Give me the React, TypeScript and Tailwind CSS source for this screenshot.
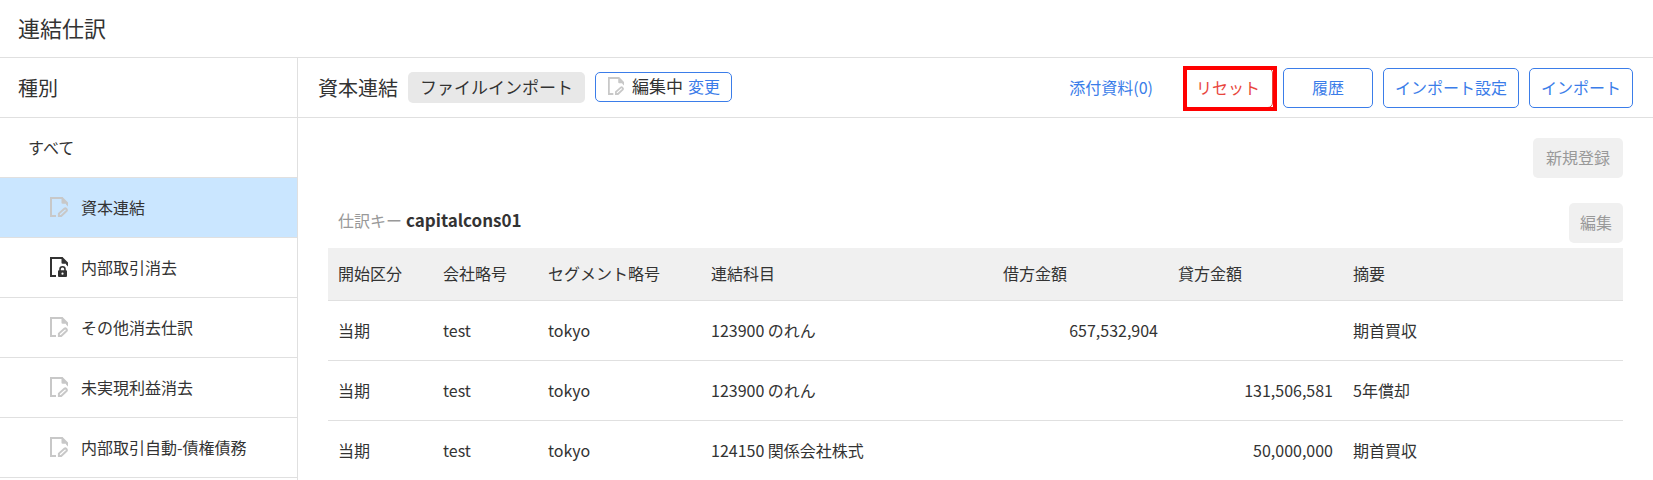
import { useState } from 'react'
import clsx from 'clsx'

type Status = 'editing' | 'locked'

const categories: { name: string; status: Status }[] = [
  { name: '資本連結', status: 'editing' },
  { name: '内部取引消去', status: 'locked' },
  { name: 'その他消去仕訳', status: 'editing' },
  { name: '未実現利益消去', status: 'editing' },
  { name: '内部取引自動-債権債務', status: 'editing' },
]

const columns = [
  { label: '開始区分', width: 'w-[105px]' },
  { label: '会社略号', width: 'w-[105px]' },
  { label: 'セグメント略号', width: 'w-[163px]' },
  { label: '連結科目', width: 'w-[292px]' },
  { label: '借方金額', width: 'w-[175px]' },
  { label: '貸方金額', width: 'w-[175px]' },
  { label: '摘要', width: '' },
]

const rows = [
  { account: '123900 のれん', debit: '657,532,904', credit: '', note: '期首買収' },
  { account: '123900 のれん', debit: '', credit: '131,506,581', note: '5年償却' },
  { account: '124150 関係会社株式', debit: '', credit: '50,000,000', note: '期首買収' },
]

function StatusIcon({ status, className }: { status: Status; className: string }) {
  return (
    <svg viewBox="0 0 18 20" className={className} aria-hidden="true">
      <path d="M6 19H1V1H12.5" fill="none" stroke="currentColor" strokeWidth="2" />
      <path d="M11.5 0H12.5L18 5.5V9.5L16 7.6V6.8H12.6Q11.5 6.8 11.5 5.7Z" fill="currentColor" />
      {status === 'editing' ? (
        <path
          d="M8.9 19V16.6L14.6 11.6Q15.4 11 16.1 11.7L16.6 12.4Q17.2 13.3 16.5 14L11.2 19Z"
          fill="none"
          stroke="currentColor"
          strokeWidth="2"
        />
      ) : (
        <>
          <path d="M10 14V12.2A2.5 2.5 0 0 1 15 12.2V14" fill="none" stroke="currentColor" strokeWidth="1.6" />
          <path
            fillRule="evenodd"
            d="M9 13.2H16Q17 13.2 17 14.2V19Q17 20 16 20H9Q8 20 8 19V14.2Q8 13.2 9 13.2ZM12.5 15.6A1.1 1.1 0 1 0 12.5 17.8A1.1 1.1 0 1 0 12.5 15.6Z"
            fill="currentColor"
          />
        </>
      )}
    </svg>
  )
}

const outlineButton = 'h-10 min-w-[90px] px-[11px] pb-[2px] rounded-[5px] border border-[#3b7de9] text-[#3b7de9] bg-white'
const disabledButton = 'h-10 px-[11px] pb-[2px] rounded-[5px] bg-[#f0f0f0] text-[#999]'

export default function App() {
  const [selected, setSelected] = useState('資本連結')

  return (
    <div className="h-screen flex flex-col overflow-hidden bg-white text-[#333] text-base font-['Noto_Sans_CJK_JP',sans-serif]">
      <header className="h-[58px] shrink-0 flex items-center px-[18px] pb-[2px] border-b border-[#e0e0e0]">
        <h1 className="text-[22px]">連結仕訳</h1>
      </header>

      <div className="flex flex-1 min-h-0">
        {/* 種別一覧 */}
        <aside className="w-[298px] shrink-0 border-r border-[#e0e0e0]">
          <h2 className="h-[60px] flex items-center px-[18px] text-xl border-b border-[#e0e0e0]">種別</h2>
          <nav>
            <button className="w-full h-[60px] px-7 pb-[2px] text-left border-b border-[#e0e0e0]">すべて</button>
            {categories.map((c) => (
              <button
                key={c.name}
                onClick={() => setSelected(c.name)}
                className={clsx(
                  'w-full h-[60px] pl-[50px] pb-[2px] flex items-center gap-[13px] border-b border-[#e0e0e0]',
                  selected === c.name && 'bg-[#cae6ff]'
                )}
              >
                <StatusIcon
                  status={c.status}
                  className={clsx('w-[18px] h-5', c.status === 'locked' ? 'text-[#333]' : 'text-[#c8c8c8]')}
                />
                {c.name}
              </button>
            ))}
          </nav>
        </aside>

        <main className="flex-1 min-w-0">
          <div className="h-[60px] flex items-center justify-between px-5 border-b border-[#e0e0e0]">
            <div className="flex items-start">
              <h2 className="self-center text-xl">資本連結</h2>
              <span className="ml-[10px] h-[31px] px-3 pb-[2px] flex items-center rounded-[5px] bg-[#e8e8e8] text-[17px]">
                ファイルインポート
              </span>
              <button className="ml-[10px] h-[30px] pl-3 pr-[11px] pb-[2px] flex items-center rounded-[5px] border border-[#3b7de9]">
                <StatusIcon status="editing" className="w-4 h-[18px] text-[#c8c8c8]" />
                <span className="ml-2 text-[17px]">編集中</span>
                <span className="ml-[5px] text-[#3b7de9]">変更</span>
              </button>
            </div>
            <div className="flex items-center gap-[10px]">
              <button className="h-10 px-3 pb-[2px] mr-2 text-[#3b7de9]">添付資料(0)</button>
              <button className="relative h-10 min-w-[90px] pb-[2px] rounded-[5px] border border-[#e8453c] text-[#e8453c]">
                リセット
                <span className="absolute -top-[3px] -bottom-1 -left-[1px] -right-[5px] border-4 border-[#ff0000]" />
              </button>
              <button className={outlineButton}>履歴</button>
              <button className={outlineButton}>インポート設定</button>
              <button className={outlineButton}>インポート</button>
            </div>
          </div>

          <div className="px-[30px] pt-5">
            <div className="flex justify-end">
              <button disabled className={clsx(disabledButton, 'min-w-[90px]')}>新規登録</button>
            </div>

            <div className="mt-[25px] mb-[5px] flex items-center justify-between">
              <p className="pl-[10px] pb-[6px] flex items-baseline gap-1">
                <span className="text-[#999]">仕訳キー</span>
                <span className="text-[17px] leading-6 font-bold">capitalcons01</span>
              </p>
              <button disabled className={disabledButton}>編集</button>
            </div>

            <table className="w-full table-fixed border-separate border-spacing-0">
              <thead>
                <tr className="h-[53px] bg-[#f0f0f0]">
                  {columns.map((col) => (
                    <th
                      key={col.label}
                      className={clsx('px-[10px] pb-[2px] text-left font-normal border-b border-[#e0e0e0]', col.width)}
                    >
                      {col.label}
                    </th>
                  ))}
                </tr>
              </thead>
              <tbody>
                {rows.map((row, i) => (
                  <tr key={i} className="h-[60px] *:px-[10px] *:pb-[2px] *:border-b *:border-[#e0e0e0]">
                    <td>当期</td>
                    <td>test</td>
                    <td>tokyo</td>
                    <td>{row.account}</td>
                    <td className="text-right">{row.debit}</td>
                    <td className="text-right">{row.credit}</td>
                    <td>{row.note}</td>
                  </tr>
                ))}
              </tbody>
            </table>
          </div>
        </main>
      </div>
    </div>
  )
}
